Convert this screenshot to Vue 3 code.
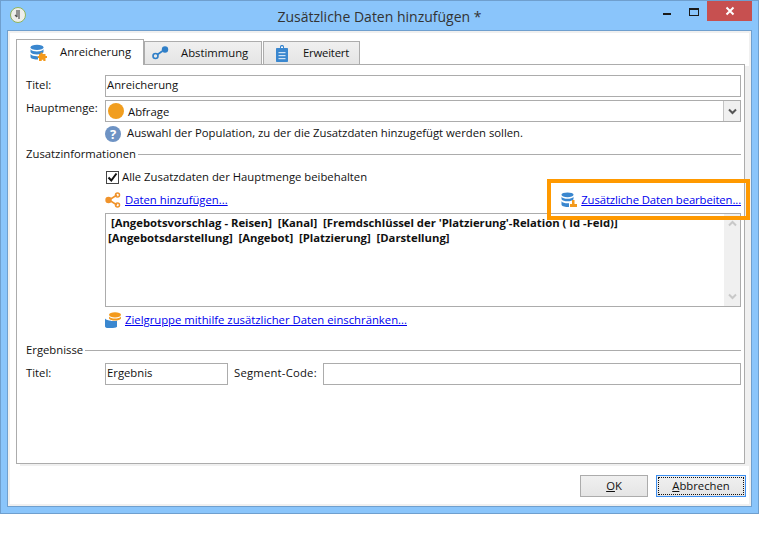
<script setup>
const tabs = [
  { id: 'a', label: 'Anreicherung' },
  { id: 'b', label: 'Abstimmung' },
  { id: 'c', label: 'Erweitert' },
]
</script>

<template>
  <div class="window">
    <header class="titlebar">
      <svg class="appicon" width="18" height="18" viewBox="0 0 18 18">
        <circle cx="9" cy="9" r="7.5" fill="#eeeeea" stroke="#8fb45a" stroke-width="1" />
        <path d="M8 4v7M10 4v9M8 11l-2-2" stroke="#555" stroke-width="1.2" fill="none" />
      </svg>
      <div class="title">Zusätzliche Daten hinzufügen *</div>
      <div class="controls">
        <span class="min"></span>
        <span class="max"></span>
        <span class="close">
          <svg width="10" height="10" viewBox="0 0 10 10"><path d="M1.5 1.5l7 7M8.5 1.5l-7 7" stroke="#fff" stroke-width="2" /></svg>
        </span>
      </div>
    </header>

    <main class="client">
      <nav class="tabs">
        <div v-for="(t, i) in tabs" :key="t.id" class="tab" :class="['tab-' + t.id, { active: i === 0 }]">
          <svg v-if="t.id === 'a'" width="18" height="18" viewBox="0 0 18 18">
            <ellipse cx="7" cy="3.4" rx="6.5" ry="2.6" fill="#3a87cf" />
            <path d="M.5 5.2c1 1.7 3.6 2.2 6.5 2.2s5.500-.5 6.500-2.200v3c-1 1.700-3.600 2.200-6.500 2.200S1.500 9.900.5 8.200z" fill="#3a87cf" />
            <path d="M.5 10c1 1.700 3.600 2.200 6.500 2.200l1 .3v2.900l-1 .1c-3.500 0-6.500-1-6.500-2.500z" fill="#3a87cf" />
            <path d="M10.500 8.500h2v1.500h3v2h1.500v2h-1.500v3h-2.200v-1.200h-1.600v1.200H9v-3H7.800v-2H9v-2h1.500z" fill="#f39a1d" />
          </svg>
          <svg v-else-if="t.id === 'b'" width="17" height="14" viewBox="0 0 17 14">
            <circle cx="3.500" cy="10" r="2.500" fill="none" stroke="#2f7fc8" stroke-width="1.600" />
            <circle cx="13" cy="3.500" r="3.200" fill="#2f7fc8" />
            <path d="M5.500 8.500l5-3.500" stroke="#2f7fc8" stroke-width="1.600" />
          </svg>
          <svg v-else width="14" height="17" viewBox="0 0 14 17">
            <path d="M1 3h3V1.500C4 .7 4.700 0 6 0h0c1.300 0 2 .7 2 1.500V3h3c.6 0 1 .4 1 1v12c0 .6-.4 1-1 1H1c-.6 0-1-.4-1-1V4c0-.6.4-1 1-1z" fill="#3a87cf" />
            <rect x="5" y="1.500" width="2" height="1.500" fill="#fff" />
            <rect x="2.500" y="7" width="7" height="1.200" fill="#cfe3f6" />
            <rect x="2.500" y="10" width="7" height="1.200" fill="#cfe3f6" />
            <rect x="2.500" y="13" width="7" height="1.200" fill="#cfe3f6" />
          </svg>
          <span class="tx">{{ t.label }}</span>
        </div>
      </nav>

      <section class="pane">
        <div class="row first">
          <label class="lbl tx up">Titel:</label>
          <div class="input grow"><span class="tx up">Anreicherung</span></div>
        </div>
        <div class="row r3">
          <label class="lbl hm">Hauptmenge:</label>
          <div class="input grow combo">
            <span class="dot"></span>
            <span class="combo-text">Abfrage</span>
            <span class="drop">
              <svg width="9" height="7" viewBox="0 0 9 7"><path d="M1 1.500l3.500 3.500L8 1.500" fill="none" stroke="#555" stroke-width="2" /></svg>
            </span>
          </div>
        </div>
        <div class="indent help">
          <svg width="16" height="16" viewBox="0 0 16 16">
            <circle cx="8" cy="8" r="8" fill="#6e93c4" />
            <text x="8" y="12.500" text-anchor="middle" class="qm">?</text>
          </svg>
          <span class="tx">Auswahl der Population, zu der die Zusatzdaten hinzugefügt werden sollen.</span>
        </div>

        <div class="section s1"><span class="tx">Zusatzinformationen</span><i></i></div>

        <div class="indent check">
          <span class="box">
            <svg width="11" height="11" viewBox="0 0 11 11"><path d="M1.500 5.500l2.800 3L9.500 1.500" fill="none" stroke="#111" stroke-width="2" /></svg>
          </span>
          <span class="tx">Alle Zusatzdaten der Hauptmenge beibehalten</span>
        </div>

        <div class="indent links">
          <a class="link-item">
            <svg width="16" height="16" viewBox="0 0 16 16">
              <circle cx="3.500" cy="8" r="3.200" fill="#f0932b" />
              <circle cx="12.500" cy="3" r="2" fill="none" stroke="#f0932b" stroke-width="1.500" />
              <circle cx="12.500" cy="13" r="2" fill="none" stroke="#f0932b" stroke-width="1.500" />
              <path d="M4 8l8-5M4 8l8 5" stroke="#f0932b" stroke-width="1.500" />
            </svg>
            <span class="lnk tx">Daten hinzufügen...</span>
          </a>
          <a class="link-item right">
            <svg width="16" height="16" viewBox="0 0 16 16">
              <ellipse cx="6.500" cy="2.800" rx="6" ry="2.400" fill="#3a87cf" />
              <path d="M.5 4.800c1 1.500 3.300 2 6 2s5-.5 6-2v2.500c-1 1.500-3.300 2-6 2s-5-.5-6-2z" fill="#3a87cf" />
              <path d="M.5 9.300c1 1.500 3.300 2 6 2H8V15l-1.500.1c-3.300 0-6-1-6-2.500z" fill="#3a87cf" />
              <path d="M11 8h2.500v4H16v3H9v-3h2z" fill="#f39a1d" />
            </svg>
            <span class="lnk tx narrow">Zusätzliche Daten bearbeiten...</span>
          </a>
        </div>

        <div class="indent area">
          <div class="area-text">
            <div>&nbsp;[Angebotsvorschlag - Reisen]&nbsp; [Kanal]&nbsp; [Fremdschlüssel der 'Platzierung'-Relation ( Id -Feld)]</div>
            <div>[Angebotsdarstellung]&nbsp; [Angebot]&nbsp; [Platzierung]&nbsp; [Darstellung]</div>
          </div>
          <div class="scroll">
            <svg width="9" height="7" viewBox="0 0 9 7"><path d="M1 5.500l3.500-3.500L8 5.500" fill="none" stroke="#c8c8c8" stroke-width="2" /></svg>
            <svg width="9" height="7" viewBox="0 0 9 7"><path d="M1 1.500l3.500 3.500L8 1.500" fill="none" stroke="#c8c8c8" stroke-width="2" /></svg>
          </div>
        </div>

        <div class="indent target">
          <svg width="16" height="16" viewBox="0 0 16 16">
            <path d="M0 6.500c1 1.500 3.500 2 6 2.200V16H3c-1.800 0-3-.7-3-1.800z" fill="#3a87cf" />
            <path d="M6 9c1 .2 4 .2 6-.3v6c-1 1-3.500 1.300-6 1.300z" fill="#3a87cf" />
            <ellipse cx="10" cy="2.800" rx="6" ry="2.600" fill="#f39a1d" />
            <path d="M4 4.500c1 1.500 3.300 2 6 2s5-.5 6-2V6.500c-1 1.500-3.300 2-6 2s-5-.5-6-2z" fill="#f39a1d" />
          </svg>
          <span class="lnk tx">Zielgruppe mithilfe zusätzlicher Daten einschränken...</span>
        </div>

        <div class="section s2"><span class="tx">Ergebnisse</span><i></i></div>

        <div class="row r6">
          <label class="lbl tx up">Titel:</label>
          <div class="input w-title"><span class="tx up">Ergebnis</span></div>
          <label class="seg tx up">Segment-Code:</label>
          <div class="input grow"></div>
        </div>

        <div class="highlight"></div>
      </section>

      <footer class="buttons">
        <button class="btn ok"><span class="tx"><u>O</u>K</span></button>
        <button class="btn cancel"><span class="focus"><span class="tx"><u>A</u>bbrechen</span></span></button>
      </footer>
    </main>
  </div>
</template>

<style>
html, body { margin: 0; background: #fff; }
</style>

<style scoped>
.window {
  width: 759px;
  height: 514px;
  box-sizing: border-box;
  background: #8ac5fb;
  border: 1px solid #6f9fce;
  display: flex;
  flex-direction: column;
  padding: 0 6px 6px;
  font-family: "Open Sans", "Noto Sans", sans-serif;
  font-size: 11.3px;
  color: #111;
}
.tx { position: relative; top: -1px; }
.tx.up { top: -2px; }
.titlebar {
  height: 29px;
  flex: none;
  position: relative;
  display: flex;
  align-items: center;
  justify-content: center;
}
.appicon { position: absolute; left: 2px; top: 5px; }
.title { font-size: 14px; color: #333; position: relative; top: 1px; }
.controls {
  position: absolute;
  right: -6px;
  top: 0;
  display: flex;
  align-items: flex-start;
}
.min { width: 8px; height: 2px; background: #1a1a1a; margin: 12px 18px 0 0; }
.max { width: 8px; height: 5px; border: 1px solid #1a1a1a; border-top-width: 2px; margin: 7px 8px 0 0; }
.close {
  width: 45px;
  height: 20px;
  background: #c75050;
  display: flex;
  align-items: center;
  justify-content: center;
  margin-right: 6px;
}
.client {
  flex: 1;
  min-height: 0;
  background: #fff;
  border: 1px solid #6f9fce;
  box-sizing: border-box;
  display: flex;
  flex-direction: column;
  padding: 8px 0 0 8px;
  box-shadow: inset 0 0 0 2px #f0f0f0;
}
.tabs { display: flex; align-items: flex-end; height: 25px; flex: none; position: relative; z-index: 1; }
.tab {
  display: flex;
  align-items: center;
  box-sizing: border-box;
  height: 23px;
  border: 1px solid #acacac;
  border-bottom: 0;
  background: linear-gradient(#f0f0f0, #e5e5e5);
  margin-right: 1px;
}
.tab.active { height: 26px; background: #fff; margin-bottom: -1px; }
.tab-a { width: 128px; padding-left: 13px; gap: 12px; margin-right: 0; }
.tab-b { width: 118px; padding-left: 7px; gap: 12px; }
.tab-c { width: 97px; padding-left: 12px; gap: 13px; letter-spacing: -0.2px; }
.pane {
  width: 729px;
  box-sizing: border-box;
  height: 400px;
  flex: none;
  background: #fff;
  border: 1px solid #acacac;
  padding: 0 3px 0 9px;
  position: relative;
  box-shadow: 4px 2px 0 #f0f0f0;
}
.row { display: flex; align-items: center; height: 22px; }
.first { margin-top: 10px; }
.r3 { margin-top: 3px; }
.r6 { margin-top: 6px; }
.lbl { width: 79px; flex: none; }
.hm { align-self: flex-start; }
.input {
  box-sizing: border-box;
  height: 22px;
  border: 1px solid #acacac;
  padding-left: 1px;
  display: flex;
  align-items: center;
  background: #fff;
}
.grow { flex: 1; min-width: 0; }
.combo { position: relative; padding-left: 2px; }
.dot { width: 16px; height: 16px; border-radius: 50%; background: #f19e1f; flex: none; }
.combo-text { margin-left: 4px; }
.drop {
  margin-left: auto;
  width: 16px;
  height: 20px;
  background: #f0f0f0;
  border-left: 1px solid #c4c4c4;
  display: flex;
  align-items: center;
  justify-content: center;
}
.indent { margin-left: 79px; }
.help { display: flex; align-items: center; gap: 6px; margin-top: 3px; height: 17px; }
.qm { font-size: 13px; font-weight: 700; fill: #fff; font-family: "Open Sans", sans-serif; }
.section { display: flex; align-items: center; height: 14px; gap: 2px; }
.section i { flex: 1; height: 1px; background: #acacac; }
.s1 { margin-top: 5px; }
.s2 { margin-top: 15px; }
.check { display: flex; align-items: center; gap: 3px; margin-top: 8px; height: 16px; padding-left: 1px; }
.box {
  width: 13px;
  height: 13px;
  box-sizing: border-box;
  border: 1px solid #444;
  background: #fff;
  display: flex;
  align-items: center;
  justify-content: center;
}
.links { display: flex; justify-content: space-between; margin-top: 7px; height: 16px; }
.link-item { display: flex; align-items: center; gap: 4px; }
.lnk { color: #0000ee; text-decoration: underline; }
.narrow { letter-spacing: -0.1px; }
.area {
  margin-top: 5px;
  height: 94px;
  box-sizing: border-box;
  border: 1px solid #acacac;
  display: flex;
  justify-content: space-between;
}
.area-text { font-weight: 700; padding: 1px 0 0 2px; line-height: 15px; white-space: nowrap; letter-spacing: -0.01px; }
.scroll {
  width: 16px;
  background: #f0f0f0;
  flex: none;
  display: flex;
  flex-direction: column;
  align-items: center;
  justify-content: space-between;
  padding: 6px 0;
  box-sizing: border-box;
}
.target { display: flex; align-items: center; gap: 4px; margin-top: 5px; height: 16px; }
.w-title { width: 123px; flex: none; }
.seg { margin: 0 6px; flex: none; width: 83px; white-space: nowrap; letter-spacing: 0.2px; }
.highlight {
  position: absolute;
  left: 530px;
  top: 114px;
  width: 203px;
  height: 41px;
  box-sizing: border-box;
  border: 4px solid #ff9900;
  pointer-events: none;
}
.buttons { display: flex; justify-content: flex-end; gap: 8px; margin-top: 11px; padding-right: 5px; }
.btn {
  font: inherit;
  color: #111;
  height: 22px;
  box-sizing: border-box;
  border: 1px solid #acacac;
  background: linear-gradient(#f0f0f0, #e5e5e5);
  padding: 0;
}
.ok { width: 68px; }
.cancel { width: 90px; border-color: #3d8ff0; padding: 1px; }
.focus {
  display: flex;
  align-items: center;
  justify-content: center;
  box-sizing: border-box;
  height: 100%;
  border: 1px dotted #111;
}
</style>
